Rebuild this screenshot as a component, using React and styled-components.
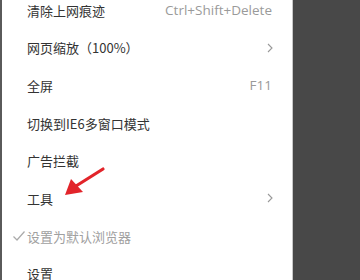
import React from "react";
import styled, { createGlobalStyle } from "styled-components";

const Global = createGlobalStyle`
  html, body {
    margin: 0;
    padding: 0;
    width: 360px;
    height: 280px;
    overflow: hidden;
    background: #484848;
  }
`;

const Screen = styled.div`
  display: flex;
  width: 360px;
  height: 280px;
  overflow: hidden;
  background: #484848;
`;

const Menu = styled.div`
  position: relative;
  width: 290px;
  height: 280px;
  background: #fff;
  border-left: 2px solid #5a5a5a;
  border-right: 1px solid #c8c8c8;
  font-family: "Noto Sans CJK SC", "Noto Sans", sans-serif;
`;

const List = styled.div`
  display: flex;
  flex-direction: column;
  margin-top: -8.8px;
`;

const Row = styled.div`
  display: flex;
  align-items: center;
  height: 37.7px;
  padding: 0 18px 0 25px;
  position: relative;
  font-size: 13px;
  color: ${({ disabled }) => (disabled ? "#a0a0a0" : "#333")};
`;

const Label = styled.span`
  flex: 1;
  white-space: nowrap;
`;

const Shortcut = styled.span`
  font-family: "Open Sans", "Noto Sans", sans-serif;
  font-size: 13.5px;
  color: #9a9a9a;
  white-space: nowrap;
  margin-right: 2px;
`;

const Check = styled.svg`
  position: absolute;
  left: 10px;
  top: 50%;
  margin-top: -6px;
`;

const Arrow = styled.svg`
  position: absolute;
  left: 0;
  top: 0;
  pointer-events: none;
`;

const Chevron = () => (
  <svg width="8" height="12" viewBox="0 0 8 12">
    <path d="M2 2 L6 6 L2 10" fill="none" stroke="#999" strokeWidth="1.1" />
  </svg>
);

const items = [
  { label: "清除上网痕迹", shortcut: "Ctrl+Shift+Delete" },
  { label: "网页缩放（100%）", sub: true },
  { label: "全屏", shortcut: "F11" },
  { label: "切换到IE6多窗口模式" },
  { label: "广告拦截" },
  { label: "工具", sub: true },
  { label: "设置为默认浏览器", checked: true, disabled: true },
  { label: "设置" },
];

export default function App() {
  return (
    <>
      <Global />
      <Screen>
        <Menu>
          <List>
            {items.map((it, i) => (
              <Row key={i} disabled={it.disabled}>
                {it.checked && (
                  <Check width="14" height="12" viewBox="0 0 14 12">
                    <path d="M1.5 6.5 L5 10 L12.5 1.5" fill="none" stroke="#aaa" strokeWidth="1.2" />
                  </Check>
                )}
                <Label>{it.label}</Label>
                {it.shortcut && <Shortcut>{it.shortcut}</Shortcut>}
                {it.sub && <Chevron />}
              </Row>
            ))}
          </List>
          <Arrow width="290" height="280" viewBox="0 0 290 280">
            <line x1="101" y1="169" x2="74" y2="186" stroke="#e2242a" strokeWidth="3.2" strokeLinecap="round" />
            <polygon points="63,195 69,179 81,192" fill="#e2242a" />
          </Arrow>
        </Menu>
      </Screen>
    </>
  );
}
